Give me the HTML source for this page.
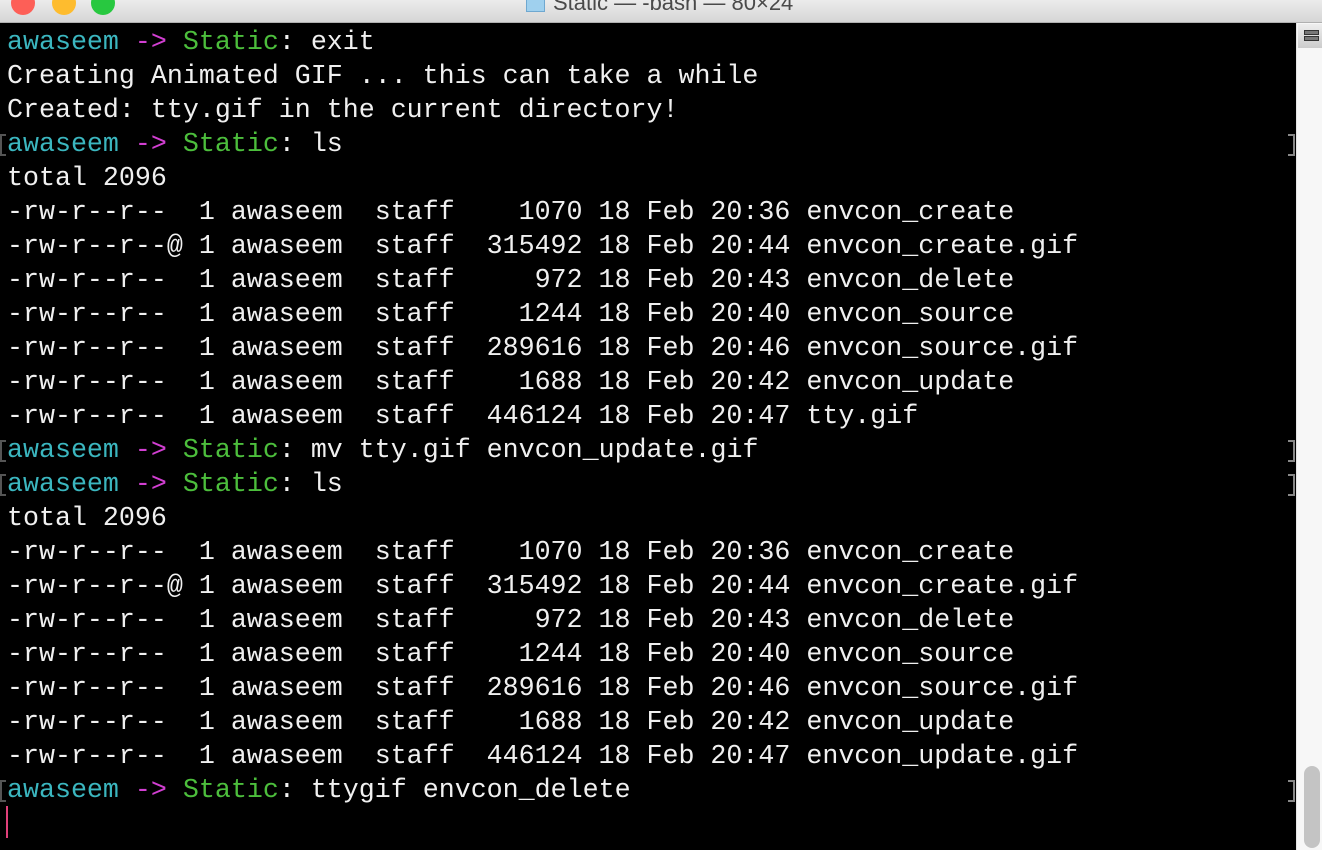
<!DOCTYPE html>
<html><head><meta charset="utf-8"><style>
html,body{margin:0;padding:0;width:1322px;height:850px;overflow:hidden;background:#000}
#tb{position:absolute;left:0;top:0;width:1322px;height:22px;background:linear-gradient(#ececec,#d6d6d6);border-bottom:1px solid #b0b0b0}
.dot{position:absolute;top:-9px;width:24px;height:24px;border-radius:50%}
#title{position:absolute;left:526px;top:-10px;font:22px "Liberation Sans",sans-serif;color:#4a4a4a;white-space:nowrap}
#folder{display:inline-block;width:17px;height:13px;background:#9fd0ee;vertical-align:middle;margin-right:8px;border:1px solid #6fa8d0}
#term{position:absolute;left:0;top:23px;width:1296px;height:827px;background:#000}
#sb{position:absolute;left:1296px;top:23px;width:26px;height:827px;background:#f7f7f7;border-left:1px solid #e4e4e4}
#thumb{position:absolute;left:1304px;top:766px;width:16px;height:82px;background:#c4c4c4;border-radius:8px}
#menu{position:absolute;left:1298px;top:24px;width:24px;height:24px;background:linear-gradient(#eee,#ccc)}
#menu div{position:absolute;left:6px;width:13px;height:3px;border:1px solid #333;background:#777}
pre{position:absolute;left:7px;top:26px;margin:0;font:26.65px/34px "Liberation Mono",monospace;color:#f0f0f0;letter-spacing:0}
.c{color:#3bb6bf}.m{color:#d23fd2}.g{color:#4cbe3c}
.br{position:absolute;left:1288px;width:5px;height:18px;border:2px solid #888;border-left:none}
.lb{position:absolute;left:0;width:4px;height:18px;border:2px solid #555;border-right:none}
#cur{position:absolute;left:6px;top:806px;width:2px;height:32px;background:#e0407a}
</style></head><body>
<div id="tb">
<div class="dot" style="left:11px;background:#fd5f57"></div>
<div class="dot" style="left:52px;background:#febc2e"></div>
<div class="dot" style="left:91px;background:#28c840"></div>
<div id="title"><span id="folder"></span>Static — -bash — 80×24</div>
</div>
<div id="term"></div>
<div id="sb"></div><div id="menu"><div style="top:6px"></div><div style="top:12px"></div></div><div id="thumb"></div>
<pre><span class="c">awaseem</span> <span class="m">-&gt;</span> <span class="g">Static</span>: exit
Creating Animated GIF ... this can take a while
Created: tty.gif in the current directory!
<span class="c">awaseem</span> <span class="m">-&gt;</span> <span class="g">Static</span>: ls
total 2096
-rw-r--r--  1 awaseem  staff    1070 18 Feb 20:36 envcon_create
-rw-r--r--@ 1 awaseem  staff  315492 18 Feb 20:44 envcon_create.gif
-rw-r--r--  1 awaseem  staff     972 18 Feb 20:43 envcon_delete
-rw-r--r--  1 awaseem  staff    1244 18 Feb 20:40 envcon_source
-rw-r--r--  1 awaseem  staff  289616 18 Feb 20:46 envcon_source.gif
-rw-r--r--  1 awaseem  staff    1688 18 Feb 20:42 envcon_update
-rw-r--r--  1 awaseem  staff  446124 18 Feb 20:47 tty.gif
<span class="c">awaseem</span> <span class="m">-&gt;</span> <span class="g">Static</span>: mv tty.gif envcon_update.gif
<span class="c">awaseem</span> <span class="m">-&gt;</span> <span class="g">Static</span>: ls
total 2096
-rw-r--r--  1 awaseem  staff    1070 18 Feb 20:36 envcon_create
-rw-r--r--@ 1 awaseem  staff  315492 18 Feb 20:44 envcon_create.gif
-rw-r--r--  1 awaseem  staff     972 18 Feb 20:43 envcon_delete
-rw-r--r--  1 awaseem  staff    1244 18 Feb 20:40 envcon_source
-rw-r--r--  1 awaseem  staff  289616 18 Feb 20:46 envcon_source.gif
-rw-r--r--  1 awaseem  staff    1688 18 Feb 20:42 envcon_update
-rw-r--r--  1 awaseem  staff  446124 18 Feb 20:47 envcon_update.gif
<span class="c">awaseem</span> <span class="m">-&gt;</span> <span class="g">Static</span>: ttygif envcon_delete</pre>
<div class="br" style="top:134px"></div><div class="br" style="top:440px"></div><div class="br" style="top:474px"></div><div class="br" style="top:780px"></div>
<div class="lb" style="top:134px"></div><div class="lb" style="top:440px"></div><div class="lb" style="top:474px"></div><div class="lb" style="top:780px"></div>
<div id="cur"></div>
</body></html>
